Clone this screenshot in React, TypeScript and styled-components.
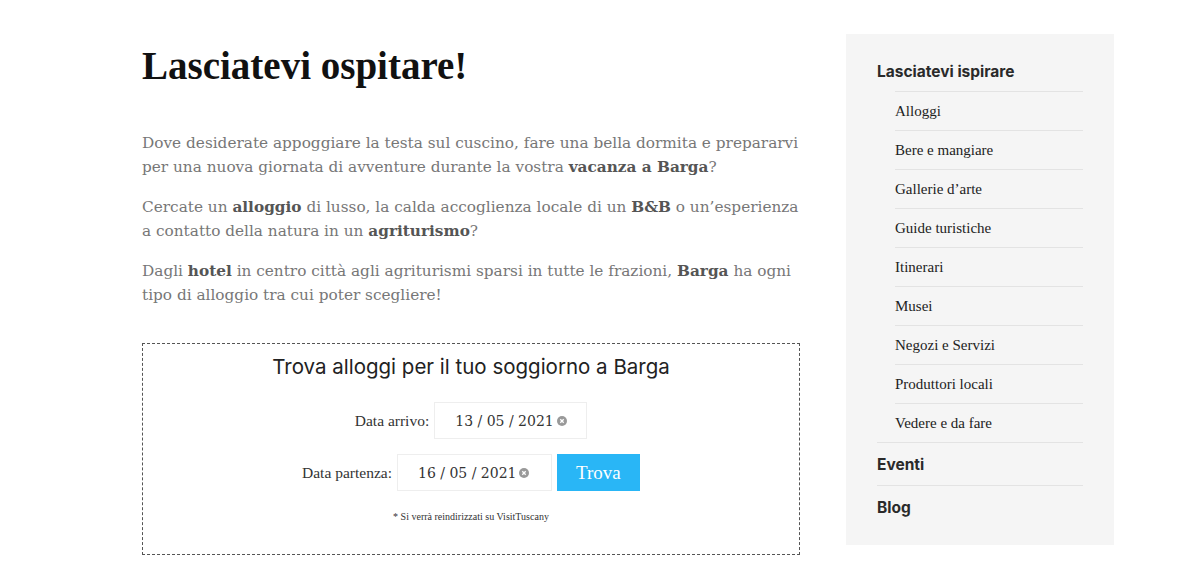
import * as React from 'react';
import styled, { createGlobalStyle } from 'styled-components';

const GlobalStyle = createGlobalStyle`
    body {
        margin: 0;
        background: #ffffff;
    }
`;

const Page = styled.div`
    display: flex;
    align-items: flex-start;
    gap: 46px;
    padding: 34px 0 0 142px;
`;

const Main = styled.main`
    width: 658px;
`;

const Title = styled.h1`
    margin: 4px 0 37px;
    font-family: 'Liberation Serif', serif;
    font-weight: 700;
    font-size: 39px;
    line-height: 56px;
    color: #111111;
`;

const Paragraph = styled.p`
    margin: 0 0 16px;
    font-family: 'DejaVu Serif', serif;
    font-size: 15.3px;
    line-height: 24px;
    color: #777777;

    & b {
        color: #555555;
        font-weight: 700;
    }
`;

const SearchBox = styled.section`
    margin-top: 36px;
    height: 212px;
    box-sizing: border-box;
    border: 1px dashed #555555;
    padding: 10px 0 0;
    display: flex;
    flex-direction: column;
    align-items: center;
`;

const SearchTitle = styled.h2`
    margin: 0 0 22px;
    font-family: Inter, sans-serif;
    font-weight: 400;
    font-size: 20.5px;
    line-height: 26px;
    color: #222222;
`;

const FieldRow = styled.div`
    display: flex;
    align-items: center;
    gap: 5px;
    margin-bottom: 15px;
`;

const Label = styled.label`
    font-family: 'Liberation Serif', serif;
    font-size: 15.5px;
    color: #333333;
`;

const DateInput = styled.div<{ $width: number }>`
    width: ${(p) => p.$width}px;
    height: 37px;
    box-sizing: border-box;
    border: 1px solid #eeeeee;
    background: #ffffff;
    display: flex;
    align-items: center;
    padding-left: 20px;
    gap: 3px;
    font-family: 'DejaVu Serif', serif;
    font-size: 14px;
    color: #333333;
`;

const ClearIcon = styled.span`
    display: inline-flex;
    width: 10px;
    height: 10px;
`;

const SubmitButton = styled.button`
    width: 83px;
    height: 37px;
    border: none;
    background: #29b6f6;
    color: #ffffff;
    font-family: 'Liberation Serif', serif;
    font-size: 19px;
    cursor: pointer;
`;

const Note = styled.div`
    margin-top: 5px;
    font-family: 'Liberation Serif', serif;
    font-size: 10px;
    color: #333333;
`;

const Sidebar = styled.aside`
    width: 268px;
    box-sizing: border-box;
    background: #f5f5f5;
    padding: 17px 31px;
`;

const MenuHeading = styled.div<{ $height: number; $border?: boolean }>`
    height: ${(p) => p.$height}px;
    box-sizing: border-box;
    display: flex;
    align-items: center;
    border-top: ${(p) => (p.$border ? '1px solid #e3e3e3' : 'none')};
    font-family: Inter, sans-serif;
    font-weight: 700;
    font-size: 15.5px;
    color: #2a2a2a;
`;

const SubMenu = styled.ul`
    list-style: none;
    margin: 0 0 0 18px;
    padding: 0;
`;

const SubItem = styled.li`
    height: 39px;
    box-sizing: border-box;
    border-top: 1px solid #e3e3e3;
    display: flex;
    align-items: center;
    font-family: 'Liberation Serif', serif;
    font-size: 15px;
    color: #222222;
`;

const Clear = () => (
    <ClearIcon>
        <svg width="10" height="10" viewBox="0 0 10 10">
            <circle cx="5" cy="5" r="5" fill="#999999" />
            <path d="M3.3 3.3 L6.7 6.7 M6.7 3.3 L3.3 6.7" stroke="#ffffff" strokeWidth="1.3" />
        </svg>
    </ClearIcon>
);

const subItems = [
    'Alloggi',
    'Bere e mangiare',
    'Gallerie d’arte',
    'Guide turistiche',
    'Itinerari',
    'Musei',
    'Negozi e Servizi',
    'Produttori locali',
    'Vedere e da fare',
];

export default function App() {
    return (
        <>
            <GlobalStyle />
            <Page>
                <Main>
                    <Title>Lasciatevi ospitare!</Title>
                    <Paragraph>
                        Dove desiderate appoggiare la testa sul cuscino, fare una bella dormita e prepararvi per una
                        nuova giornata di avventure durante la vostra <b>vacanza a Barga</b>?
                    </Paragraph>
                    <Paragraph>
                        Cercate un <b>alloggio</b> di lusso, la calda accoglienza locale di un <b>B&amp;B</b> o
                        un’esperienza a contatto della natura in un <b>agriturismo</b>?
                    </Paragraph>
                    <Paragraph>
                        Dagli <b>hotel</b> in centro città agli agriturismi sparsi in tutte le frazioni, <b>Barga</b>{' '}
                        ha ogni tipo di alloggio tra cui poter scegliere!
                    </Paragraph>
                    <SearchBox>
                        <SearchTitle>Trova alloggi per il tuo soggiorno a Barga</SearchTitle>
                        <FieldRow>
                            <Label>Data arrivo:</Label>
                            <DateInput $width={153}>
                                13 / 05 / 2021
                                <Clear />
                            </DateInput>
                        </FieldRow>
                        <FieldRow>
                            <Label>Data partenza:</Label>
                            <DateInput $width={155}>
                                16 / 05 / 2021
                                <Clear />
                            </DateInput>
                            <SubmitButton>Trova</SubmitButton>
                        </FieldRow>
                        <Note>* Si verrà reindirizzati su VisitTuscany</Note>
                    </SearchBox>
                </Main>
                <Sidebar>
                    <MenuHeading $height={40}>Lasciatevi ispirare</MenuHeading>
                    <SubMenu>
                        {subItems.map((item) => (
                            <SubItem key={item}>{item}</SubItem>
                        ))}
                    </SubMenu>
                    <MenuHeading $height={43} $border>
                        Eventi
                    </MenuHeading>
                    <MenuHeading $height={43} $border>
                        Blog
                    </MenuHeading>
                </Sidebar>
            </Page>
        </>
    );
}
